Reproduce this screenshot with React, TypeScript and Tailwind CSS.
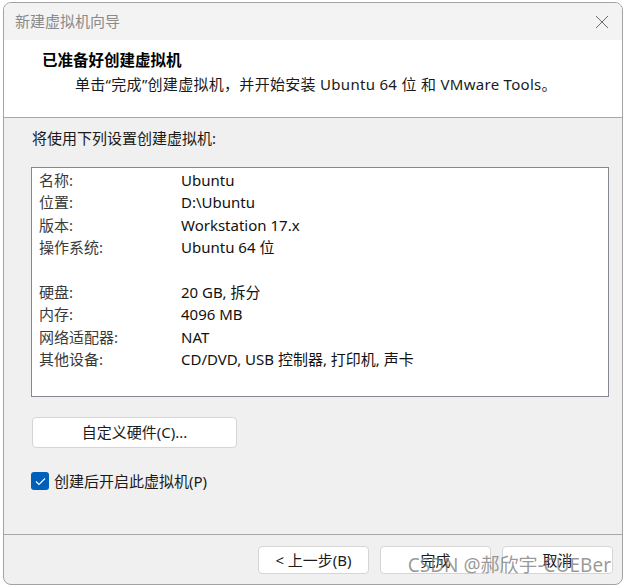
import React from 'react';

const ROWS: [string, string][] = [
  ['名称:', 'Ubuntu'],
  ['位置:', 'D:\\Ubuntu'],
  ['版本:', 'Workstation 17.x'],
  ['操作系统:', 'Ubuntu 64 位'],
  ['', ''],
  ['硬盘:', '20 GB, 拆分'],
  ['内存:', '4096 MB'],
  ['网络适配器:', 'NAT'],
  ['其他设备:', 'CD/DVD, USB 控制器, 打印机, 声卡'],
];

function FooterButton({ children }: { children: React.ReactNode }) {
  return (
    <button
      type="button"
      className="flex h-[28px] w-[111px] items-center justify-center rounded-[4px] border border-[#d5d5d5] bg-white text-[15px] text-[#1b1b1b]"
    >
      {children}
    </button>
  );
}

export default function App() {
  return (
    <div className="min-h-[586px] bg-white pl-[3px] pt-[2px] font-['Noto_Sans','Noto_Sans_CJK_SC',sans-serif]">
      <div className="relative flex h-[583px] w-[620px] flex-col overflow-hidden rounded-[8px] border border-[#a3a3a3] bg-[#f0f0f0]">
        {/* title bar */}
        <div className="flex h-[37px] shrink-0 items-center justify-between bg-[#f3f3f3] pl-[11px] pr-[12px]">
          <span className="text-[15px] leading-none text-[#8a8a8a]">新建虚拟机向导</span>
          <svg width="14" height="14" viewBox="0 0 14 14" className="mr-[1px]">
            <path d="M1 1 L13 13 M13 1 L1 13" stroke="#6b6b6b" strokeWidth="1" fill="none" />
          </svg>
        </div>

        {/* header */}
        <div className="h-[78px] shrink-0 border-b border-[#a8a8a8] bg-white pt-[10px]">
          <div className="pl-[38px] text-[15.5px] font-bold leading-[20px] text-black">已准备好创建虚拟机</div>
          <div className="mt-[4px] pl-[71px] text-[15px] leading-[20px] tracking-[0.3px] text-[#1a1a1a]">
            单击“完成”创建虚拟机，并开始安装 Ubuntu 64 位 和 VMware Tools。
          </div>
        </div>

        {/* body */}
        <div className="flex flex-1 flex-col pt-[10px]">
          <div className="pl-[28px] text-[15px] leading-[20px] text-[#1a1a1a]">将使用下列设置创建虚拟机:</div>
          <div className="ml-[27px] mt-[19px] h-[230px] w-[578px] border border-[#848891] bg-white pl-[7px] pt-[1px]">
            {ROWS.map(([label, value], i) => (
              <div key={i} className="flex h-[22.4px] items-center text-[15px] leading-[22.4px]">
                <span className="w-[142px] shrink-0 text-[#3a3a3a]">{label}</span>
                <span className="text-[#111]">{value}</span>
              </div>
            ))}
          </div>

          <button
            type="button"
            className="ml-[28px] mt-[20px] flex h-[31px] w-[205px] items-center justify-center rounded-[4px] border border-[#d5d5d5] bg-white text-[15px] text-[#1b1b1b]"
          >
            自定义硬件(C)...
          </button>

          <label className="ml-[27px] mt-[24px] flex items-center gap-[5px] text-[15px] leading-[18px] text-[#1a1a1a]">
            <span className="flex h-[18px] w-[18px] items-center justify-center rounded-[3px] bg-[#005fb8]">
              <svg width="11" height="9" viewBox="0 0 11 9">
                <path d="M1 4.5 L4 7.5 L10 1.5" stroke="#fff" strokeWidth="1.1" fill="none" />
              </svg>
            </span>
            创建后开启此虚拟机(P)
          </label>
        </div>

        {/* footer */}
        <div className="flex h-[50px] shrink-0 justify-end gap-[11px] border-t border-[#a8a8a8] pr-[9px] pt-[11px]">
          <FooterButton>&lt; 上一步(B)</FooterButton>
          <FooterButton>完成</FooterButton>
          <FooterButton>取消</FooterButton>
        </div>

        <span className="pointer-events-none absolute bottom-[9px] right-[11px] text-[19px] leading-none text-[rgba(120,120,120,0.75)]">
          CSDN @郝欣宇-CUEBer
        </span>
      </div>
    </div>
  );
}
